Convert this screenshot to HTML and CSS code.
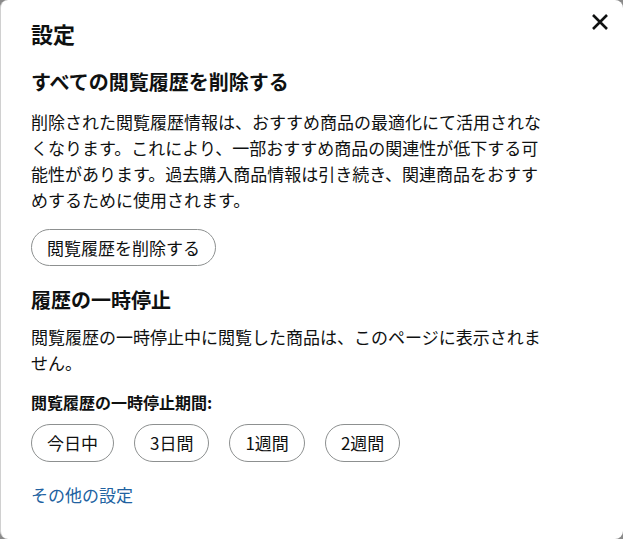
FILE: index.html
```html
<!DOCTYPE html>
<html lang="ja">
<head>
<meta charset="utf-8">
<title>設定</title>
<link rel="stylesheet" href="styles.css">
</head>
<body>
<div class="dialog">
  <div class="header">
    <h1 class="title">設定</h1>
    <button class="close" aria-label="閉じる">
      <svg width="18" height="18" viewBox="0 0 18 18"><path d="M2 2 L16 16 M16 2 L2 16" stroke="#0f1111" stroke-width="2.6" stroke-linecap="butt" fill="none"/></svg>
    </button>
  </div>
  <div class="content">
    <h2 class="heading first">すべての閲覧履歴を削除する</h2>
    <p class="text">削除された閲覧履歴情報は、おすすめ商品の最適化にて活用されなくなります。これにより、一部おすすめ商品の関連性が低下する可能性があります。過去購入商品情報は引き続き、関連商品をおすすめするために使用されます。</p>
    <div class="row first-row"><button class="pill delete">閲覧履歴を削除する</button></div>
    <h2 class="heading second">履歴の一時停止</h2>
    <p class="text tight">閲覧履歴の一時停止中に閲覧した商品は、このページに表示されません。</p>
    <div class="label">閲覧履歴の一時停止期間:</div>
    <div class="row pills">
      <button class="pill period">今日中</button>
      <button class="pill period">3日間</button>
      <button class="pill period">1週間</button>
      <button class="pill period">2週間</button>
    </div>
    <a class="link" href="#">その他の設定</a>
  </div>
</div>
</body>
</html>
```

FILE: styles.css
```css
html, body {
  margin: 0;
  padding: 0;
  height: 100%;
}
body {
  background: #8a8a8a;
  font-family: "Noto Sans CJK JP", "Noto Sans", "Liberation Sans", sans-serif;
  color: #0f1111;
}
.dialog {
  box-sizing: border-box;
  min-height: 100vh;
  background: #fff;
  border-radius: 8px;
  border-left: 1px solid #d0d0d0;
  padding: 18px 14px 0 30px;
}
.header {
  display: flex;
  justify-content: space-between;
  align-items: flex-start;
}
.title {
  margin: 0;
  font-size: 22px;
  line-height: 30px;
  font-weight: 700;
}
.close {
  margin: -5px 0 0 0;
  padding: 0;
  border: 0;
  background: none;
  width: 18px;
  height: 18px;
  cursor: pointer;
}
.close svg { display: block; }
.content {
  max-width: 520px;
}
.heading {
  margin: 0;
  font-size: 20px;
  line-height: 28px;
  font-weight: 700;
}
.heading.first { margin-top: 20px; }
.heading.second { margin-top: 20px; }
.text {
  margin: 13px 0 0 0;
  font-size: 17px;
  line-height: 26px;
}
.text.tight { margin-top: 10px; }
.row {
  display: flex;
  gap: 20px;
}
.first-row { margin-top: 16px; }
.pill {
  font-family: inherit;
  font-size: 17px;
  color: #0f1111;
  background: #fff;
  border: 1px solid #8d9090;
  border-radius: 100px;
  padding: 6px 15px;
  line-height: 24px;
  cursor: pointer;
}
.pill.delete {
  line-height: 23px;
}
.label {
  margin-top: 14px;
  font-size: 16px;
  line-height: 24px;
  font-weight: 700;
}
.pills { margin-top: 10px; }
.link {
  display: inline-block;
  margin-top: 21px;
  font-size: 17px;
  line-height: 24px;
  color: #2162a1;
  text-decoration: none;
}
```
